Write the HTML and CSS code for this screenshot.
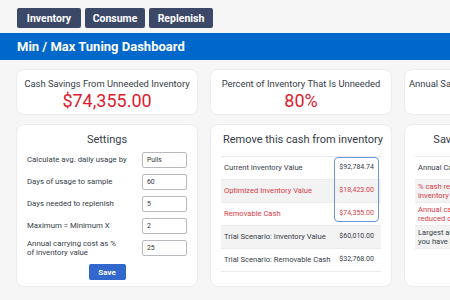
FILE: index.html
```html
<!DOCTYPE html>
<html lang="en">
<head>
    <meta charset="UTF-8">
    <meta name="viewport" content="width=device-width, initial-scale=1.0">
    <title>Min / Max Tuning Dashboard</title>
    <link rel="stylesheet" href="styles.css">
</head>
<body>
    <nav class="nav">
        <button class="nav-btn">Inventory</button>
        <button class="nav-btn">Consume</button>
        <button class="nav-btn">Replenish</button>
    </nav>

    <div class="titlebar">Min / Max Tuning Dashboard</div>

    <div class="grid">
        <div class="card stat">
            <div class="stat-label">Cash Savings From Unneeded Inventory</div>
            <div class="stat-value">$74,355.00</div>
        </div>
        <div class="card stat">
            <div class="stat-label">Percent of Inventory That Is Unneeded</div>
            <div class="stat-value">80%</div>
        </div>
        <div class="card stat">
            <div class="stat-label">Annual Savings From Reduced Carrying Cost</div>
            <div class="stat-value">$18,588.75</div>
        </div>

        <form class="card settings">
            <h2 class="card-title center">Settings</h2>
            <div class="form-row">
                <label for="usage">Calculate avg. daily usage by</label>
                <input type="text" id="usage" value="Pulls">
            </div>
            <div class="form-row">
                <label for="days">Days of usage to sample</label>
                <input type="text" id="days" value="60">
            </div>
            <div class="form-row">
                <label for="lead">Days needed to replenish</label>
                <input type="text" id="lead" value="5">
            </div>
            <div class="form-row">
                <label for="max">Maximum = Minimum X</label>
                <input type="text" id="max" value="2">
            </div>
            <div class="form-row">
                <label for="carry">Annual carrying cost as %<br>of inventory value</label>
                <input type="text" id="carry" value="25">
            </div>
            <button type="button" class="save-btn">Save</button>
        </form>

        <div class="card table-card">
            <h2 class="card-title">Remove this cash from inventory</h2>
            <div class="table-wrap">
                <table>
                    <tr><td>Current Inventory Value</td><td class="num">$92,784.74</td></tr>
                    <tr class="shade red"><td>Optimized Inventory Value</td><td class="num">$18,423.00</td></tr>
                    <tr class="red"><td>Removable Cash</td><td class="num">$74,355.00</td></tr>
                    <tr class="shade"><td>Trial Scenario: Inventory Value</td><td class="num">$60,010.00</td></tr>
                    <tr><td>Trial Scenario: Removable Cash</td><td class="num">$32,768.00</td></tr>
                </table>
                <div class="highlight"></div>
            </div>
        </div>

        <div class="card table-card">
            <h2 class="card-title center">Savings on carrying costs</h2>
            <table class="wide">
                <tr><td>Annual Carrying Cost</td><td class="num">$23,196.19</td></tr>
                <tr class="shade red"><td>% cash removed from<br>inventory</td><td class="num">80%</td></tr>
                <tr class="red"><td>Annual carrying cost with<br>reduced cash</td><td class="num">$4,605.75</td></tr>
                <tr class="shade"><td>Largest annual savings<br>you have achieved</td><td class="num">$18,588.75</td></tr>
            </table>
        </div>
    </div>
</body>
</html>
```

FILE: styles.css
```css
body {
    margin: 0;
    background-color: #f6f6f6;
    font-family: Roboto, "Open Sans", sans-serif;
    color: #363c48;
    overflow: hidden;
    width: 450px;
}
.nav {
    display: flex;
    gap: 4px;
    padding: 8px 17px 0;
}
.nav-btn {
    width: 64px;
    height: 20px;
    padding: 0;
    border: none;
    border-radius: 2px;
    background-color: #3b4868;
    color: white;
    font-family: inherit;
    font-size: 10.5px;
    font-weight: bold;
}
.nav-btn:nth-child(2) {
    width: 60px;
}
.titlebar {
    margin-top: 5px;
    height: 27px;
    line-height: 27px;
    padding-left: 17px;
    background-color: #0068cb;
    color: white;
    font-size: 13px;
    font-weight: bold;
}
.grid {
    display: grid;
    grid-template-columns: repeat(3, 182px);
    gap: 9px 12px;
    padding: 9px 16px;
}
.card {
    background-color: white;
    border: 1px solid #ececec;
    border-radius: 8px;
    box-sizing: border-box;
}
.stat {
    height: 46px;
    padding: 7px 4px 0;
    text-align: center;
    white-space: nowrap;
    overflow: hidden;
}
.stat-label {
    font-size: 9.4px;
    line-height: 13px;
}
.stat-value {
    font-size: 18px;
    line-height: 22px;
    color: #e0202f;
}
.card-title {
    margin: 0;
    font-size: 11px;
    font-weight: normal;
    line-height: 16px;
    white-space: nowrap;
}
.center {
    text-align: center;
}
.settings {
    height: 163px;
    padding: 7px 10px 0;
    margin: 0;
    display: flex;
    flex-direction: column;
    gap: 6px;
}
.settings .card-title {
    margin-bottom: -2px;
}
.form-row {
    display: flex;
    align-items: center;
    justify-content: space-between;
    height: 16px;
}
.form-row label {
    font-size: 7.8px;
    line-height: 9.5px;
}
.form-row input {
    width: 45px;
    height: 16px;
    box-sizing: border-box;
    border: 1px solid #b9b9c0;
    border-radius: 2px;
    padding: 0 4px;
    font-family: inherit;
    font-size: 6.8px;
    color: #333;
}
.save-btn {
    align-self: center;
    margin-top: 2px;
    width: 37px;
    height: 16px;
    border: none;
    border-radius: 2px;
    background-color: #3267cb;
    color: white;
    font-family: inherit;
    font-size: 8px;
    font-weight: bold;
}
.table-card {
    height: 163px;
    padding: 7px 10px 0;
}
.table-card .card-title {
    padding-left: 2px;
    margin-bottom: 8px;
}
.table-wrap {
    position: relative;
}
table {
    width: 100%;
    border-collapse: collapse;
    border-top: 1px solid #ececec;
    font-size: 7.6px;
}
td {
    height: 22px;
    padding: 0 3px;
    border-bottom: 1px solid #ececec;
    line-height: 9.5px;
}
td.num {
    text-align: right;
    padding-right: 7px;
    font-size: 7px;
}
.shade td {
    background-color: #f3f3f3;
}
.red td {
    color: #d83a45;
}
.highlight {
    position: absolute;
    top: 1px;
    right: 2px;
    width: 45px;
    height: 65px;
    box-sizing: border-box;
    border: 1px solid #6e93e2;
    border-radius: 4px;
}
table.wide td {
    white-space: nowrap;
}
```
